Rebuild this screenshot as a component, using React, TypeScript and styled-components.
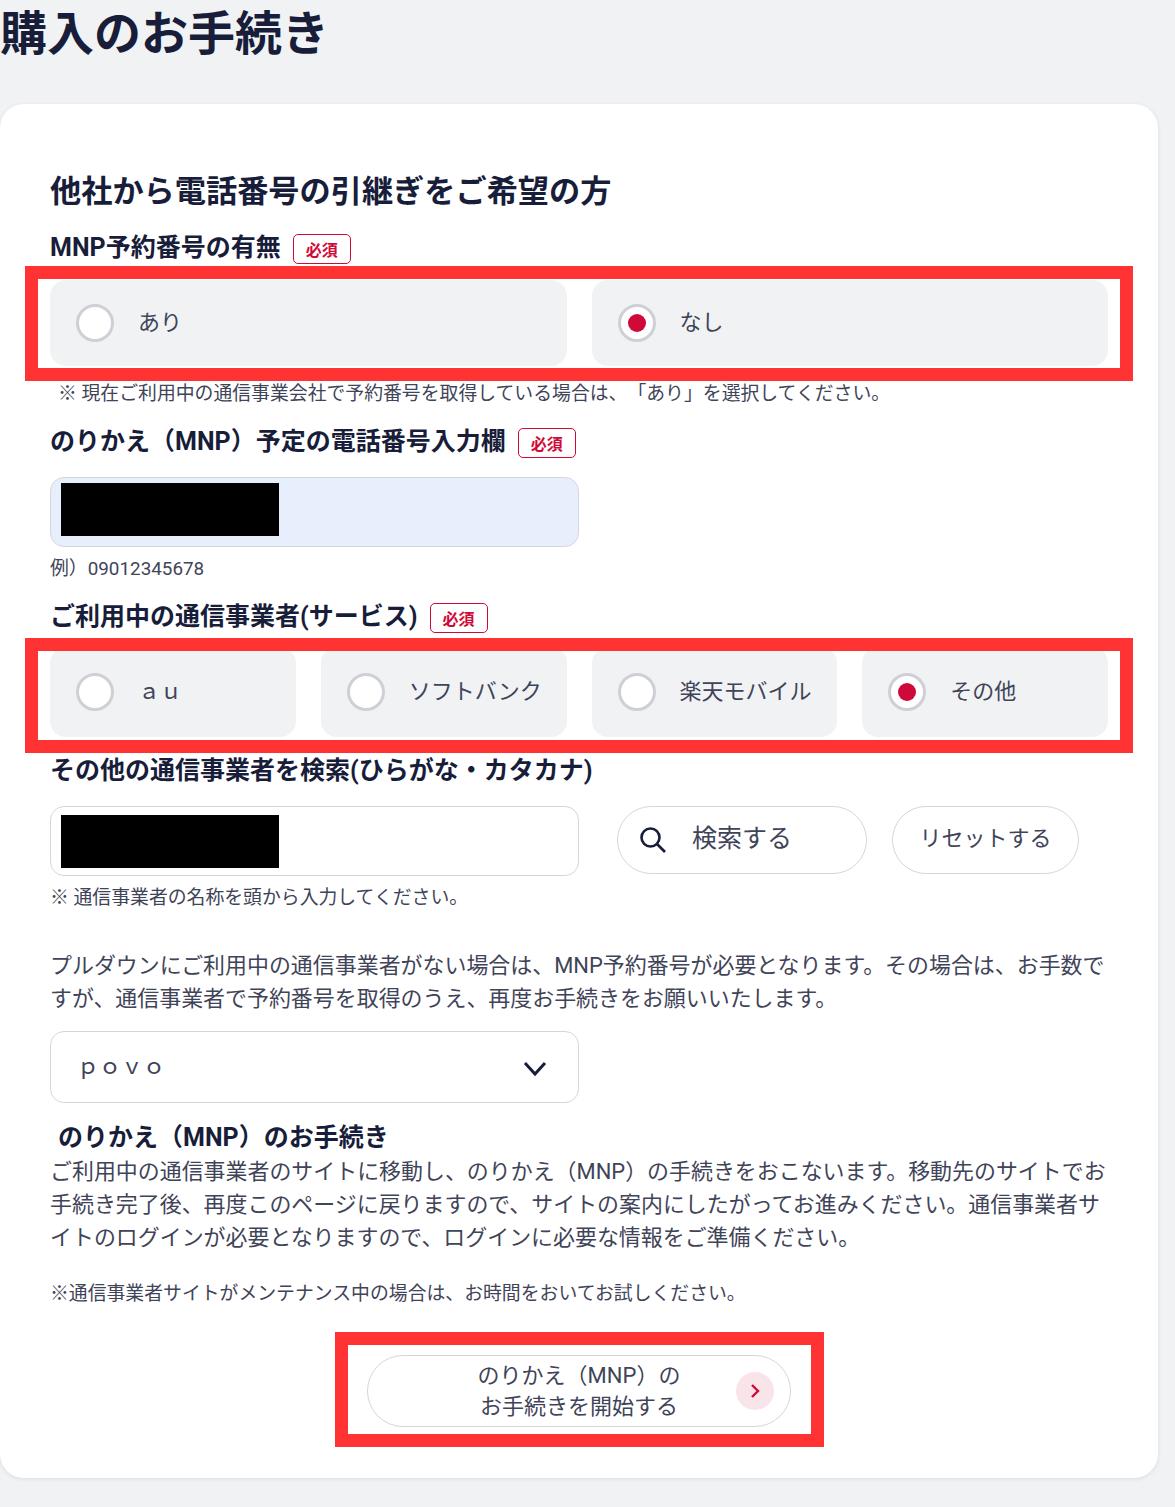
import React from "react";
import styled, { createGlobalStyle } from "styled-components";

const GlobalStyle = createGlobalStyle`
  html, body {
    margin: 0;
    padding: 0;
    background-color: #f1f2f4;
    font-family: "Roboto", "Noto Sans CJK JP", sans-serif;
    color: #3f4458;
    text-spacing-trim: space-all;
  }
`;

const Page = styled.div`
  width: 1175px;
  height: 1507px;
  overflow: hidden;
`;

const PageTitle = styled.h1`
  margin: 0;
  height: 104px;
  padding-top: 5px;
  box-sizing: border-box;
  font-size: 47px;
  line-height: 58px;
  font-weight: 700;
  color: #181d3a;
`;

const Card = styled.main`
  width: 1158px;
  height: 1374px;
  box-sizing: border-box;
  padding: 68px 50px 0;
  background-color: #fff;
  border-radius: 24px;
  box-shadow: 0 1px 4px rgba(24, 29, 58, 0.1);
`;

const SectionTitle = styled.h2`
  margin: 0 0 17px;
  font-size: 31.2px;
  line-height: 40px;
  font-weight: 700;
  color: #181d3a;
`;

const Label = styled.div<{ $mt?: number }>`
  display: flex;
  align-items: center;
  gap: 12px;
  height: 32px;
  margin-top: ${(p) => p.$mt ?? 0}px;
  font-size: 25px;
  font-weight: 700;
  color: #181d3a;
  white-space: nowrap;
`;

const Required = styled.span`
  display: flex;
  align-items: center;
  justify-content: center;
  width: 58px;
  height: 30px;
  box-sizing: border-box;
  margin-top: 8px;
  border: 1px solid #cf0a38;
  border-radius: 5px;
  font-size: 16px;
  font-weight: 700;
  color: #cf0a38;
`;

const RadioRow = styled.div<{ $mt: number; $cols: number; $h: number }>`
  position: relative;
  display: grid;
  grid-template-columns: repeat(${(p) => p.$cols}, 1fr);
  gap: 25px;
  width: 1058px;
  height: ${(p) => p.$h}px;
  margin-top: ${(p) => p.$mt}px;
`;

const RadioCard = styled.label`
  display: flex;
  align-items: center;
  padding-left: 26px;
  background-color: #f1f2f4;
  border-radius: 16px;
  font-size: 22px;
  color: #3f4458;
`;

const RadioText = styled.span`
  margin-bottom: 6px;
`;

const RadioMark = styled.span<{ $on?: boolean }>`
  position: relative;
  flex: none;
  width: 38px;
  height: 38px;
  box-sizing: border-box;
  margin-right: 24px;
  border: 3px solid #cfd0d6;
  border-radius: 50%;
  background-color: #fff;

  &::after {
    content: "";
    display: ${(p) => (p.$on ? "block" : "none")};
    position: absolute;
    top: 7px;
    left: 7px;
    width: 18px;
    height: 18px;
    border-radius: 50%;
    background-color: #cf0a38;
  }
`;

const Highlight = styled.div<{ $top: number; $bottom: number; $left: number; $right: number }>`
  position: absolute;
  top: -${(p) => p.$top}px;
  bottom: -${(p) => p.$bottom}px;
  left: -${(p) => p.$left}px;
  right: -${(p) => p.$right}px;
  border: 13px solid #ff3333;
  pointer-events: none;
`;

const Note = styled.p<{ $mt: number; $ml?: number }>`
  margin: ${(p) => p.$mt}px 0 0 ${(p) => p.$ml ?? 0}px;
  font-size: 18.85px;
  line-height: 26px;
  color: #3f4458;
  white-space: nowrap;
`;

const TextBox = styled.div<{ $filled?: boolean; $mt: number }>`
  width: 529px;
  height: 70px;
  box-sizing: border-box;
  margin-top: ${(p) => p.$mt}px;
  padding: ${(p) => (p.$filled ? 5 : 8)}px 10px;
  border: 1px solid #d5d6db;
  border-radius: 14px;
  background-color: ${(p) => (p.$filled ? "#e8effc" : "#fff")};
`;

const Redacted = styled.div`
  width: 218px;
  height: 53px;
  background-color: #000;
`;

const SearchRow = styled.div`
  display: flex;
  align-items: flex-start;
  margin-top: 22px;
`;

const PillButton = styled.button<{ $w: number; $ml: number }>`
  display: flex;
  align-items: center;
  justify-content: center;
  width: ${(p) => p.$w}px;
  height: 68px;
  margin-left: ${(p) => p.$ml}px;
  padding: 0 0 8px;
  border: 1px solid #d5d6db;
  border-radius: 34px;
  background-color: #fff;
  font-family: inherit;
  font-size: 22px;
  color: #3f4458;
`;

const SearchButton = styled(PillButton)`
  justify-content: flex-start;
  gap: 24px;
  padding-left: 20px;
  font-size: 25px;

  svg {
    margin-top: 8px;
  }
`;

const Paragraph = styled.p<{ $mt: number }>`
  margin: ${(p) => p.$mt}px 0 0;
  width: 1064px;
  font-size: 21.95px;
  line-height: 33px;
  color: #3f4458;
`;

const SelectBox = styled.div`
  display: flex;
  align-items: center;
  justify-content: space-between;
  width: 529px;
  height: 72px;
  box-sizing: border-box;
  margin-top: 16px;
  padding: 0 30px 0 26px;
  border: 1px solid #d5d6db;
  border-radius: 14px;
  font-size: 22px;
  color: #3f4458;

  svg {
    margin-top: 3px;
  }
`;

const SelectValue = styled.span`
  margin-bottom: 7px;
`;

const SubTitle = styled.h3`
  margin: 19px 0 0 8px;
  font-size: 25px;
  line-height: 32px;
  font-weight: 700;
  color: #181d3a;
`;

const ActionWrap = styled.div`
  position: relative;
  width: 424px;
  height: 72px;
  margin: 48px 0 0 317px;
`;

const ActionButton = styled.button`
  position: relative;
  width: 100%;
  height: 100%;
  padding: 0;
  border: 1px solid #d5d6db;
  border-radius: 36px;
  background-color: #fff;
  font-family: inherit;
  font-size: 22px;
  line-height: 31px;
  color: #3f4458;
`;

const ArrowCircle = styled.span`
  position: absolute;
  top: 16px;
  right: 16px;
  display: flex;
  align-items: center;
  justify-content: center;
  width: 38px;
  height: 38px;
  border-radius: 50%;
  background-color: #f9e4ea;
`;

const carriers = [
  { name: "ａｕ", on: false },
  { name: "ソフトバンク", on: false },
  { name: "楽天モバイル", on: false },
  { name: "その他", on: true },
];

export default function App() {
  return (
    <Page>
      <GlobalStyle />
      <PageTitle>購入のお手続き</PageTitle>
      <Card>
        <SectionTitle>他社から電話番号の引継ぎをご希望の方</SectionTitle>
        <Label>
          MNP予約番号の有無<Required>必須</Required>
        </Label>
        <RadioRow $mt={19} $cols={2} $h={86}>
          <RadioCard>
            <RadioMark />
            <RadioText>あり</RadioText>
          </RadioCard>
          <RadioCard>
            <RadioMark $on />
            <RadioText>なし</RadioText>
          </RadioCard>
          <Highlight $top={14} $bottom={15} $left={25} $right={25} />
        </RadioRow>
        <Note $mt={15} $ml={8}>
          ※ 現在ご利用中の通信事業会社で予約番号を取得している場合は、「あり」を選択してください。
        </Note>
        <Label $mt={16}>
          のりかえ（MNP）予定の電話番号入力欄<Required>必須</Required>
        </Label>
        <TextBox $filled $mt={22}>
          <Redacted />
        </TextBox>
        <Note $mt={9}>例）09012345678</Note>
        <Label $mt={16}>
          ご利用中の通信事業者(サービス)<Required>必須</Required>
        </Label>
        <RadioRow $mt={17} $cols={4} $h={90}>
          {carriers.map((carrier) => (
            <RadioCard key={carrier.name}>
              <RadioMark $on={carrier.on} />
              <RadioText>{carrier.name}</RadioText>
            </RadioCard>
          ))}
          <Highlight $top={9} $bottom={16} $left={25} $right={25} />
        </RadioRow>
        <Label $mt={15}>その他の通信事業者を検索(ひらがな・カタカナ)</Label>
        <SearchRow>
          <TextBox $mt={0}>
            <Redacted />
          </TextBox>
          <SearchButton $w={250} $ml={38}>
            <svg width="30" height="30" viewBox="0 0 30 30" fill="none" stroke="#181d3a" strokeWidth="2.6">
              <circle cx="12.5" cy="12.5" r="9" />
              <path d="M19 19l8 8" />
            </svg>
            検索する
          </SearchButton>
          <PillButton $w={187} $ml={25}>
            リセットする
          </PillButton>
        </SearchRow>
        <Note $mt={9}>※ 通信事業者の名称を頭から入力してください。</Note>
        <Paragraph $mt={38}>
          プルダウンにご利用中の通信事業者がない場合は、MNP予約番号が必要となります。その場合は、お手数ですが、通信事業者で予約番号を取得のうえ、再度お手続きをお願いいたします。
        </Paragraph>
        <SelectBox>
          <SelectValue>ｐｏｖｏ</SelectValue>
          <svg width="26" height="16" viewBox="0 0 26 16" fill="none" stroke="#181d3a" strokeWidth="3">
            <path d="M3 2l10 11L23 2" />
          </svg>
        </SelectBox>
        <SubTitle>のりかえ（MNP）のお手続き</SubTitle>
        <Paragraph $mt={1}>
          ご利用中の通信事業者のサイトに移動し、のりかえ（MNP）の手続きをおこないます。移動先のサイトでお手続き完了後、再度このページに戻りますので、サイトの案内にしたがってお進みください。通信事業者サイトのログインが必要となりますので、ログインに必要な情報をご準備ください。
        </Paragraph>
        <Note $mt={27}>※通信事業者サイトがメンテナンス中の場合は、お時間をおいてお試しください。</Note>
        <ActionWrap>
          <ActionButton>
            のりかえ（MNP）の
            <br />
            お手続きを開始する
            <ArrowCircle>
              <svg width="12" height="18" viewBox="0 0 12 18" fill="none" stroke="#cf0a38" strokeWidth="2.4">
                <path d="M3 3l6 6-6 6" />
              </svg>
            </ArrowCircle>
          </ActionButton>
          <Highlight $top={23} $bottom={20} $left={32} $right={33} />
        </ActionWrap>
      </Card>
    </Page>
  );
}
